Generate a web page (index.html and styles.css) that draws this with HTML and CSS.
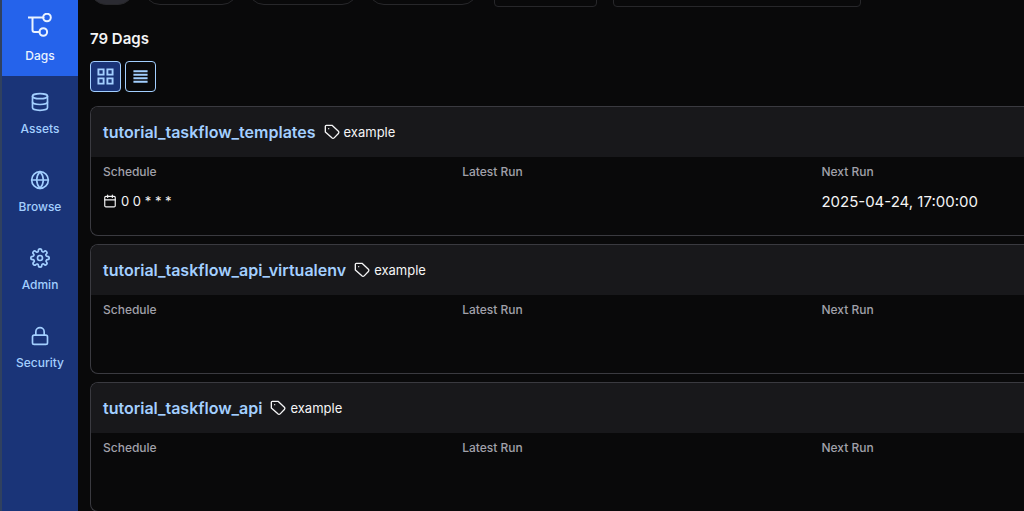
FILE: index.html
```html
<!DOCTYPE html>
<html lang="en">
  <head>
    <meta charset="UTF-8" />
    <meta name="viewport" content="width=device-width, initial-scale=1.0" />
    <title>Dags</title>
    <link rel="stylesheet" href="styles.css">
  </head>
  <body>
    <!-- shared icons -->
    <svg class="sprite" aria-hidden="true">
      <symbol id="tag" viewBox="0 0 24 24">
        <path d="M21.6 14.2l-6.4 6.6a2.4 2.4 0 0 1-3.4 0L2 12V3.5a1.5 1.5 0 0 1 1.5-1.5H12l9.6 8.9a2.3 2.3 0 0 1 0 3.3z"/>
        <path d="M7 7h.01"/>
      </symbol>
    </svg>

    <nav class="sidebar">
      <a class="nav-item active" href="#dags">
        <svg class="icon dags-icon" viewBox="0 0 24 24">
          <path d="M0.5 4.5h15M4.5 4.5v12.5a2 2 0 0 0 2 2h5"/>
          <circle cx="19" cy="4.5" r="3.8"/>
          <circle cx="15.3" cy="19" r="3.8"/>
        </svg>
        <span>Dags</span>
      </a>
      <a class="nav-item" href="#assets">
        <svg class="icon" viewBox="0 0 24 24">
          <ellipse cx="12" cy="5" rx="9" ry="3"/>
          <path d="M21 12c0 1.66-4 3-9 3s-9-1.34-9-3"/>
          <path d="M3 5v14c0 1.66 4 3 9 3s9-1.34 9-3V5"/>
        </svg>
        <span>Assets</span>
      </a>
      <a class="nav-item" href="#browse">
        <svg class="icon" viewBox="0 0 24 24">
          <circle cx="12" cy="12" r="10"/>
          <path d="M2 12h20"/>
          <path d="M12 2a15.3 15.3 0 0 1 4 10 15.3 15.3 0 0 1-4 10 15.3 15.3 0 0 1-4-10 15.3 15.3 0 0 1 4-10z"/>
        </svg>
        <span>Browse</span>
      </a>
      <a class="nav-item" href="#admin">
        <svg class="icon" viewBox="0 0 24 24">
          <circle cx="12" cy="12" r="3"/>
          <path d="M19.4 15a1.65 1.65 0 0 0 .33 1.82l.06.06a2 2 0 0 1-2.83 2.83l-.06-.06a1.65 1.65 0 0 0-2.8 1.17V21a2 2 0 0 1-4 0v-.09a1.65 1.65 0 0 0-2.9-1.09l-.06.06a2 2 0 0 1-2.83-2.83l.06-.06A1.65 1.65 0 0 0 3.1 14H3a2 2 0 0 1 0-4h.09a1.65 1.65 0 0 0 1.09-2.9l-.06-.06a2 2 0 0 1 2.83-2.83l.06.06A1.65 1.65 0 0 0 10 3.09V3a2 2 0 0 1 4 0v.09a1.65 1.65 0 0 0 2.82 1.17l.06-.06a2 2 0 0 1 2.83 2.83l-.06.06A1.65 1.65 0 0 0 20.91 10H21a2 2 0 0 1 0 4h-.09a1.65 1.65 0 0 0-1.51 1z"/>
        </svg>
        <span>Admin</span>
      </a>
      <a class="nav-item" href="#security">
        <svg class="icon" viewBox="0 0 24 24">
          <rect x="3" y="11" width="18" height="11" rx="2"/>
          <path d="M7 11V7a5 5 0 0 1 10 0v4"/>
        </svg>
        <span>Security</span>
      </a>
    </nav>

    <main class="content">
      <div class="filters">
        <button class="pill selected" aria-label="All"></button>
        <button class="pill failed" aria-label="Failed"></button>
        <button class="pill running" aria-label="Running"></button>
        <button class="pill running" aria-label="Success"></button>
        <select class="select" aria-label="State"></select>
        <select class="select wide" aria-label="Tags"></select>
      </div>

      <h1>79 Dags</h1>

      <div class="views">
        <button class="view on" aria-label="Card view">
          <svg class="icon" viewBox="0 0 18 18">
            <path d="M1.5 1.5h5.5v5.5h-5.5zM11 1.5h5.5v5.5h-5.5zM1.5 11h5.5v5.5h-5.5zM11 11h5.5v5.5h-5.5z"/>
          </svg>
        </button>
        <button class="view" aria-label="Table view">
          <svg class="icon" viewBox="0 0 18 18">
            <path d="M1.5 3.5h15M1.5 7.2h15M1.5 10.8h15M1.5 14.5h15"/>
          </svg>
        </button>
      </div>

      <div class="cards">
        <article class="card">
          <header>
            <a href="#tutorial_taskflow_templates">tutorial_taskflow_templates</a>
            <svg class="icon"><use href="#tag"/></svg>
            <span>example</span>
          </header>
          <div class="stats">
            <section>
              <h2>Schedule</h2>
              <p class="schedule">
                <svg class="icon" viewBox="0 0 24 24">
                  <rect x="3" y="4" width="18" height="18" rx="2"/>
                  <path d="M16 2v4M8 2v4M3 10h18"/>
                </svg>
                <span>0 0 * * *</span>
              </p>
            </section>
            <section>
              <h2>Latest Run</h2>
            </section>
            <section>
              <h2>Next Run</h2>
              <p class="date">2025-04-24, 17:00:00</p>
            </section>
          </div>
        </article>

        <article class="card">
          <header>
            <a href="#tutorial_taskflow_api_virtualenv">tutorial_taskflow_api_virtualenv</a>
            <svg class="icon"><use href="#tag"/></svg>
            <span>example</span>
          </header>
          <div class="stats">
            <section><h2>Schedule</h2></section>
            <section><h2>Latest Run</h2></section>
            <section><h2>Next Run</h2></section>
          </div>
        </article>

        <article class="card">
          <header>
            <a href="#tutorial_taskflow_api">tutorial_taskflow_api</a>
            <svg class="icon"><use href="#tag"/></svg>
            <span>example</span>
          </header>
          <div class="stats">
            <section><h2>Schedule</h2></section>
            <section><h2>Latest Run</h2></section>
            <section><h2>Next Run</h2></section>
          </div>
        </article>
      </div>
    </main>
  </body>
</html>
```
FILE: styles.css
```css
* {
  box-sizing: border-box;
}
body {
  margin: 0;
  min-height: 100vh;
  display: flex;
  background-color: #09090a;
  color: #f4f4f5;
  font-family: Inter, "Liberation Sans", sans-serif;
}
h1, h2, p {
  margin: 0;
}
a {
  text-decoration: none;
}
button {
  padding: 0;
}
.sprite {
  display: none;
}
.icon {
  width: 20px;
  height: 20px;
  fill: none;
  stroke: currentColor;
  stroke-width: 2;
  stroke-linecap: round;
  stroke-linejoin: round;
}

.sidebar {
  width: 78px;
  flex-shrink: 0;
  background-color: #1a3478;
  border-left: 2px solid #30415f;
}
.nav-item {
  height: 78px;
  padding-top: 16px;
  display: flex;
  flex-direction: column;
  align-items: center;
  gap: 9px;
  color: #a3cfff;
  font-size: 12px;
  line-height: 16px;
  font-weight: 500;
}
.nav-item.active {
  height: 76px;
  padding-top: 13px;
  gap: 11px;
  background-color: #2563eb;
  color: #eaf3ff;
}
.dags-icon {
  width: 24px;
  height: 24px;
}

.content {
  flex: 1;
  min-width: 0;
  padding-left: 12px;
}
.filters {
  height: 7px;
  display: flex;
  align-items: flex-end;
  gap: 10px;
  overflow: hidden;
}
.pill {
  width: 44px;
  height: 32px;
  flex-shrink: 0;
  margin-bottom: 2px;
  background: none;
  border: 1px solid #27272a;
  border-radius: 16px;
}
.pill.selected {
  background-color: #2b2b32;
}
.pill.failed {
  width: 94px;
}
.pill.running {
  width: 110px;
}
.select {
  width: 103px;
  height: 32px;
  flex-shrink: 0;
  margin-left: 6px;
  appearance: none;
  background: none;
  border: 1px solid #27272a;
  border-radius: 4px;
}
.select.wide {
  width: 248px;
}
h1 {
  margin-top: 20px;
  font-size: 15px;
  line-height: 24px;
  font-weight: 600;
}
.views {
  margin-top: 10px;
  display: flex;
  gap: 4px;
}
.view {
  width: 31px;
  height: 31px;
  display: flex;
  align-items: center;
  justify-content: center;
  background: none;
  border: 1px solid #a3cfff;
  border-radius: 4px;
  color: #a3cfff;
}
.view.on {
  background-color: #1a3478;
}
.view .icon {
  width: 17px;
  height: 17px;
  stroke-linecap: butt;
  stroke-linejoin: miter;
}

.cards {
  margin-top: 14px;
  display: grid;
  gap: 8px;
}
/* cards run off the right edge */
.card {
  height: 130px;
  border: 1px solid #3a3a40;
  border-right: none;
  border-radius: 8px 0 0 8px;
  overflow: hidden;
}
.card header {
  height: 50px;
  padding-left: 12px;
  display: flex;
  align-items: center;
  background-color: #18181b;
  font-size: 13px;
}
.card header a {
  color: #a3cfff;
  font-size: 16px;
  font-weight: 600;
}
.card header .icon {
  width: 16px;
  height: 16px;
  margin: 0 4px 0 8px;
}
.stats {
  padding: 7px 0 0 12px;
  display: grid;
  grid-template-columns: 39fr 39fr 22fr;
}
h2 {
  color: #a1a1aa;
  font-size: 12px;
  line-height: 16px;
  font-weight: 500;
}
.schedule {
  margin-top: 12px;
  display: flex;
  align-items: center;
  gap: 4px;
  font-size: 13px;
  line-height: 18px;
}
.schedule .icon {
  width: 14px;
  height: 14px;
}
.date {
  margin-top: 12px;
  font-size: 15px;
  line-height: 20px;
  white-space: nowrap;
}
```
